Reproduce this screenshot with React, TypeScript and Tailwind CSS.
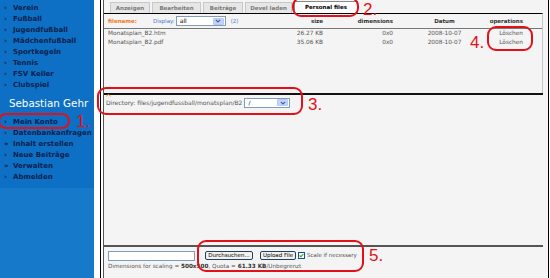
const menuTop = ['Verein', 'Fußball', 'Jugendfußball', 'Mädchenfußball', 'Sportkegeln', 'Tennis', 'FSV Keller', 'Clubspiel'];
const menuUser = [
  { label: 'Mein Konto', b: '›' },
  { label: 'Datenbankanfragen', b: '›' },
  { label: 'Inhalt erstellen', b: '»' },
  { label: 'Neue Beiträge', b: '›' },
  { label: 'Verwalten', b: '»' },
  { label: 'Abmelden', b: '›' },
];
const tabs = [
  { label: 'Anzeigen', w: 'w-[40px]' },
  { label: 'Bearbeiten', w: 'w-[49px]' },
  { label: 'Beiträge', w: 'w-[40px]' },
  { label: 'Devel laden', w: 'w-[47px]' },
];
const files = [
  { name: 'Monatsplan_B2.htm', size: '26.27 KB' },
  { name: 'Monatsplan_B2.pdf', size: '35.06 KB' },
];

function XpSelect({ value, w }: { value: string; w: string }) {
  return (
    <div className={`${w} h-[10px] flex items-center bg-white border border-[#7f9db9] pl-[3px] pr-[1px]`}>
      <span className="flex-1 text-[6px] leading-none text-black">{value}</span>
      <span className="w-[11px] h-[7px] rounded-[1px] bg-[#c3d3fd] border border-[#b6c8f4] flex items-center justify-center">
        <svg width="6" height="4" viewBox="0 0 6 4">
          <path d="M0.8 0.8 L3 3 L5.2 0.8" fill="none" stroke="#4d6185" strokeWidth="1.2" />
        </svg>
      </span>
    </div>
  );
}

function Ring({ cls }: { cls: string }) {
  return <div className={`absolute border-2 border-[#e3101a] rounded-[9px] ${cls}`} />;
}

function Num({ n, cls }: { n: string; cls: string }) {
  return <span className={`absolute font-['Liberation_Sans',sans-serif] text-[17px] leading-none text-[#e3101a] ${cls}`}>{n}</span>;
}

export default function App() {
  return (
    <div className="relative flex h-[278px] w-[550px] overflow-hidden bg-white font-['DejaVu_Sans',sans-serif]">
      {/* Sidebar */}
      <aside className="w-[94px] flex flex-col bg-[#0e70c4]">
        <div className="pt-[3px] h-[188px]">
          {menuTop.map((m) => (
            <div key={m} className="flex h-[11px] items-center text-[7px] font-bold text-[#0b1f4e] whitespace-nowrap">
              <span className="w-[13px] pl-[4px]">›</span>
              <span>{m}</span>
            </div>
          ))}
          <div className="mt-[6px] pl-[9px] h-[14px] flex items-center text-[10.3px] text-white whitespace-nowrap">Sebastian Gehr</div>
          <div className="mt-[6px]">
            {menuUser.map((m) => (
              <div key={m.label} className="flex h-[11px] items-center text-[7px] font-bold text-[#0b1f4e] whitespace-nowrap">
                <span className="w-[13px] pl-[4px]">{m.b}</span>
                <span>{m.label}</span>
              </div>
            ))}
          </div>
        </div>
        <div className="flex-1 bg-[#1779c9]" />
      </aside>

      <div className="w-[6px]" />

      {/* Main panel */}
      <div className="flex-1 mr-[1px] pl-[2px] bg-white border-l border-r border-black">
        <div className="h-full flex flex-col border-l border-[#555] bg-[#f4f4f4] pr-[5px]">
          {/* Tabs */}
          <div className="h-[13px] flex items-end gap-[2px] pl-[6px]">
            {tabs.map((t) => (
              <div key={t.label} className={`${t.w} h-[11px] flex items-center justify-center bg-[#e6e6e6] border border-b-0 border-[#c8c8c8] text-[5.5px] font-bold text-[#7a7a7a]`}>
                {t.label}
              </div>
            ))}
            <div className="w-[64px] h-[12px] flex items-center justify-center bg-white border border-b-0 border-[#888] text-[5.5px] font-bold text-black">
              Personal files
            </div>
          </div>

          {/* Files */}
          <div className="h-[80px] border-t border-black border-r border-r-[#c4c4c4]">
            <div className="grid grid-cols-[172px_43px_70px_103px_27px] h-[15px] items-center pl-[4px] border-b border-[#777] text-[5.5px] font-bold text-[#333]">
              <div className="flex items-center">
                <span className="text-[#f07a1a]">filename:</span>
                <span className="ml-[16px] font-normal text-[#4a7ac9]">Display:</span>
                <span className="ml-[1px] font-normal"><XpSelect value="all" w="w-[50px]" /></span>
                <span className="ml-[5px] font-normal text-[#4a7ac9]">(2)</span>
              </div>
              <div className="text-right">size</div>
              <div className="text-right">dimensions</div>
              <div className="text-center">Datum</div>
              <div className="flex justify-end whitespace-nowrap">operations</div>
            </div>
            {files.map((f) => (
              <div key={f.name} className="grid grid-cols-[172px_43px_70px_103px_27px] h-[9px] items-center pl-[4px] text-[5.8px] text-[#555]">
                <div>{f.name}</div>
                <div className="text-right whitespace-nowrap">{f.size}</div>
                <div className="text-right">0x0</div>
                <div className="text-center">2008-10-07</div>
                <div className="flex justify-end">Löschen</div>
              </div>
            ))}
          </div>

          {/* Directory */}
          <div className="h-[152px] border-t-2 border-[#111]">
            <div className="flex items-center pl-[2px] pt-[2px] h-[13px]">
              <span className="relative text-[6px] text-[#555] whitespace-nowrap">
                <svg className="absolute left-0 -top-[5px]" width="5" height="4" viewBox="0 0 5 4">
                  <path d="M0.5 3.5 Q2.5 -0.5 4.5 3.5" fill="none" stroke="#f0a030" strokeWidth="1" />
                </svg>
                Directory: files/jugendfussball/monatsplan/B2
              </span>
              <span className="ml-[2px]"><XpSelect value="/" w="w-[46px]" /></span>
            </div>
          </div>

          {/* Upload */}
          <div className="flex-1 border-t-2 border-[#555] pl-[4px] pt-[3px]">
            <div className="flex items-center h-[11px]">
              <div className="w-[87px] h-[10px] bg-white border border-[#7f9db9]" />
              <div className="ml-[10px] w-[48px] h-[9px] flex items-center justify-center rounded-[2px] border border-[#1c3f6e] bg-[#f2f2ec] text-[5.5px] text-black">Durchsuchen...</div>
              <div className="ml-[7px] w-[36px] h-[9px] flex items-center justify-center rounded-[2px] border border-[#1c3f6e] bg-[#f2f2ec] text-[5.5px] text-black">Upload File</div>
              <div className="ml-[2px] w-[7px] h-[7px] flex items-center justify-center bg-white border border-[#1c5180]">
                <svg width="5" height="5" viewBox="0 0 5 5">
                  <path d="M0.6 2.4 L1.9 3.8 L4.4 1" fill="none" stroke="#21a121" strokeWidth="1.1" />
                </svg>
              </div>
              <span className="ml-[2px] text-[5.5px] text-[#555]">Scale if necessary</span>
            </div>
            <div className="mt-[1px] text-[5.7px] leading-[8px] text-[#555] whitespace-nowrap">
              Dimensions for scaling = <b className="text-[#333]">500x500</b>, Quota = <b className="text-[#333]">61.33 KB</b>/Unbegrenzt
            </div>
          </div>
        </div>
      </div>

      {/* Annotations */}
      <Ring cls="left-[-2px] top-[113px] w-[72px] h-[16px]" />
      <Num n="1." cls="left-[76px] top-[113px]" />
      <Ring cls="left-[292px] top-[-3px] w-[67px] h-[20px]" />
      <Num n="2." cls="left-[363px] top-[1px]" />
      <Ring cls="left-[97px] top-[87px] w-[206px] h-[28px]" />
      <Num n="3." cls="left-[308px] top-[96px]" />
      <Ring cls="left-[487px] top-[26px] w-[46px] h-[25px]" />
      <Num n="4." cls="left-[470px] top-[34px]" />
      <Ring cls="left-[197px] top-[240px] w-[167px] h-[32px]" />
      <Num n="5." cls="left-[369px] top-[247px]" />
    </div>
  );
}
